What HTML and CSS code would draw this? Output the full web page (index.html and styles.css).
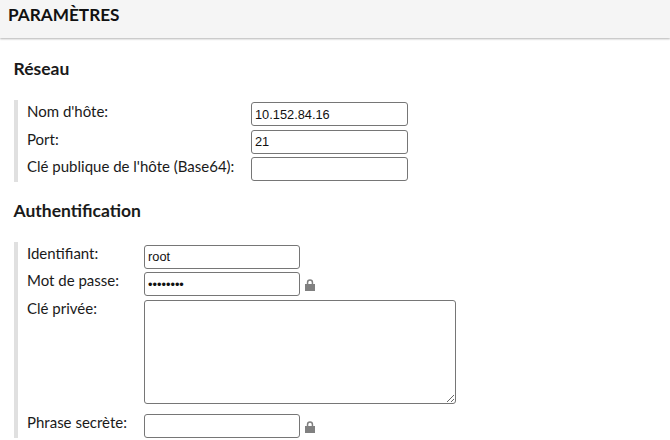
FILE: index.html
```html
<!DOCTYPE html>
<html lang="fr">
<head>
  <meta charset="UTF-8">
  <title>Paramètres</title>
  <link rel="stylesheet" href="styles.css">
</head>

<body>
  <div class="header">PARAMÈTRES</div>

  <div class="content">
    <h2 class="section-title">Réseau</h2>
    <div class="group group-network">
      <label class="label">Nom d'hôte:</label>
      <input class="field" type="text" value="10.152.84.16">
      <label class="label">Port:</label>
      <input class="field" type="text" value="21">
      <label class="label">Clé publique de l'hôte (Base64):</label>
      <input class="field" type="text">
    </div>

    <h2 class="section-title section-auth">Authentification</h2>
    <div class="group group-auth">
      <label class="label">Identifiant:</label>
      <input class="field" type="text" value="root">
      <label class="label">Mot de passe:</label>
      <div class="with-lock">
        <input class="field" type="password" value="password">
        <svg class="lock" viewBox="0 0 10 12"><path d="M1.8 5V3.4a3.2 3.2 0 0 1 6.4 0V5H10v7H0V5zM3.3 5h3.4V3.4a1.7 1.7 0 0 0-3.4 0z"/></svg>
      </div>
      <label class="label">Clé privée:</label>
      <textarea class="field area"></textarea>
      <label class="label label-last">Phrase secrète:</label>
      <div class="with-lock with-lock-last">
        <input class="field" type="password">
        <svg class="lock" viewBox="0 0 10 12"><path d="M1.8 5V3.4a3.2 3.2 0 0 1 6.4 0V5H10v7H0V5zM3.3 5h3.4V3.4a1.7 1.7 0 0 0-3.4 0z"/></svg>
      </div>
    </div>
  </div>
</body>
</html>
```

FILE: styles.css
```css
html, body {
  height: 100%;
  overflow: hidden;
}

body {
  margin: 0;
  background: #ffffff;
  color: #1a1a1a;
  font-family: Lato, sans-serif;
  font-size: 15px;
}

.header {
  height: 38px;
  padding: 5px 8px 0;
  box-sizing: border-box;
  background: #f5f5f5;
  box-shadow: 0 1px 2px rgba(0, 0, 0, 0.3);
  color: #111111;
  font-size: 17.2px;
  font-weight: 700;
  line-height: 20px;
}

.content {
  padding: 20px 14px 0;
}

.section-title {
  margin: 0 0 0 -0.5px;
  font-size: 17.5px;
  font-weight: 700;
  line-height: 21px;
  color: #1a1a1a;
}

.section-auth {
  margin-top: 18px;
}

.group {
  display: grid;
  border-left: 4px solid #e0e0e0;
  padding-left: 9px;
  margin-top: 21px;
  row-gap: 3.5px;
  align-items: start;
}

.group-network {
  grid-template-columns: 224px 157px;
  padding-top: 2px;
  padding-bottom: 1px;
}

.group-auth {
  grid-template-columns: 117px auto;
  padding-top: 2.8px;
  justify-items: start;
}

.group-auth .label {
  margin-top: -1px;
}

.label {
  line-height: 18px;
}

.field {
  box-sizing: border-box;
  width: 157px;
  height: 24px;
  margin: 0;
  padding: 2px 3px;
  border: 1px solid #767676;
  border-radius: 3px;
  background: #ffffff;
  color: #111111;
  font-family: "Liberation Sans", sans-serif;
  font-size: 12.8px;
}

.group-auth .field {
  width: 156px;
}

.group-auth .area {
  display: block;
  width: 312px;
  height: 104px;
  resize: both;
}

.with-lock {
  display: flex;
  align-items: center;
  gap: 5px;
}

.with-lock-last {
  margin-top: 6.5px;
}

.group-auth .label-last {
  margin-top: 5.5px;
}

.lock {
  width: 10px;
  height: 12px;
  margin-top: 2px;
  fill: #808080;
}
```
